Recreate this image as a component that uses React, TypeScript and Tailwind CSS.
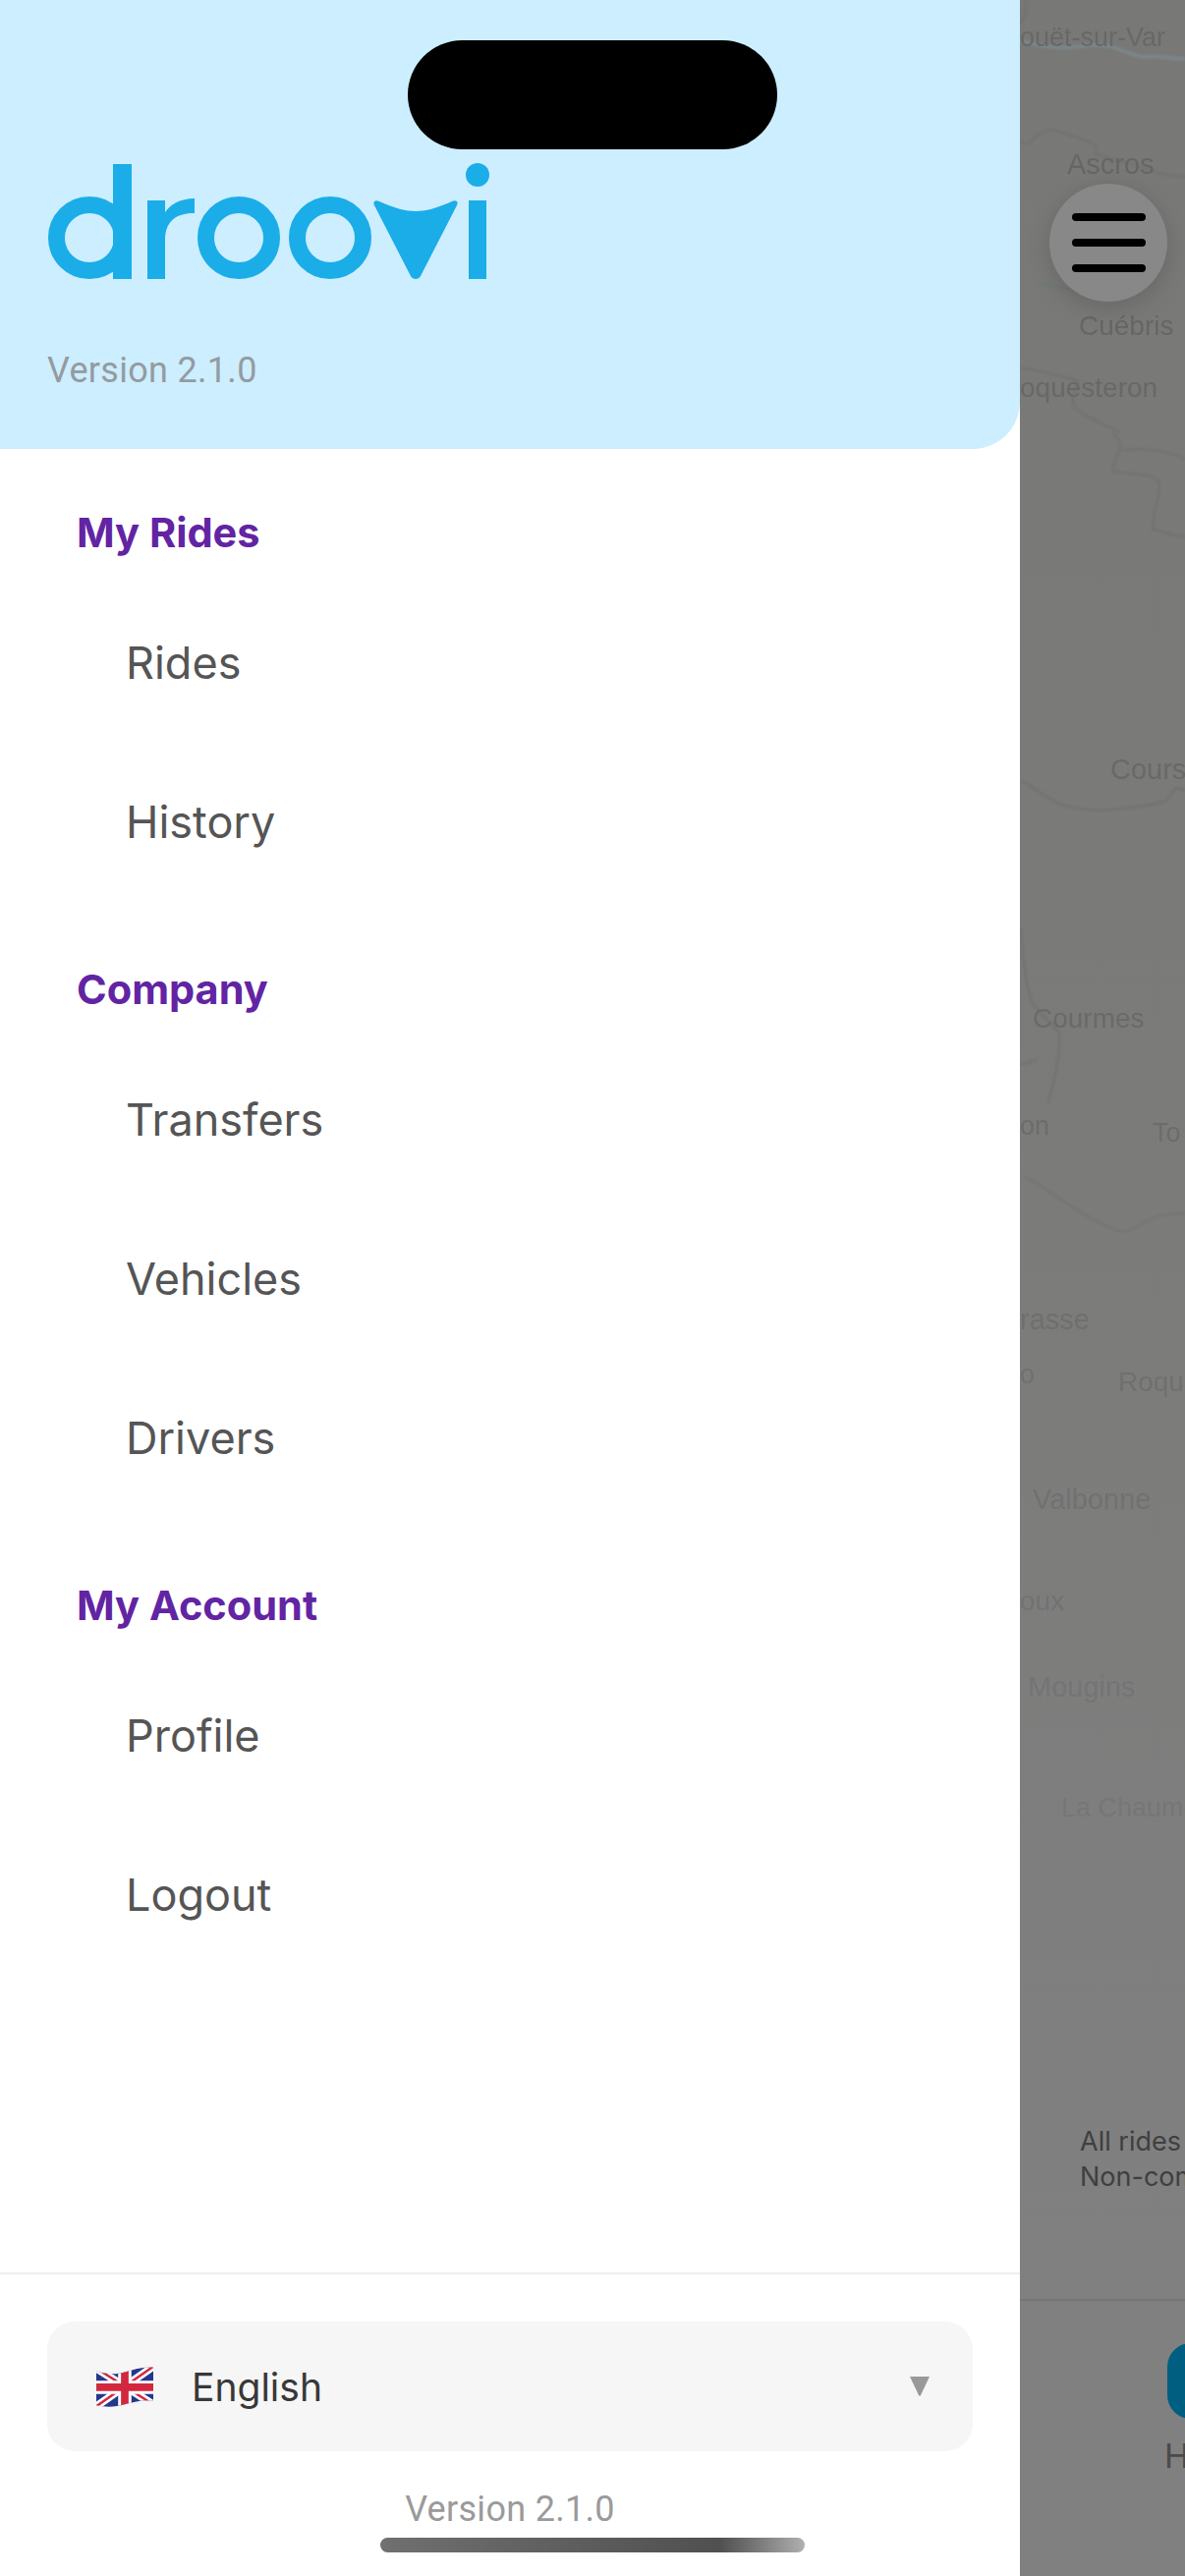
const sections = [
  { title: "My Rides", items: ["Rides", "History"] },
  { title: "Company", items: ["Transfers", "Vehicles", "Drivers"] },
  { title: "My Account", items: ["Profile", "Logout"] },
];

const mapLabels = [
  { text: "ouët-sur-Var", className: "left-[0px] top-[22px] text-[27px] text-[#686868]" },
  { text: "Ascros", className: "left-[48px] top-[151px] text-[29px] text-[#666666]" },
  { text: "Cuébris", className: "left-[60px] top-[316px] text-[28px] text-[#666666]" },
  { text: "oquesteron", className: "left-[0px] top-[379px] text-[28px] text-[#686868]" },
  { text: "Cours", className: "left-[92px] top-[767px] text-[29px] text-[#696969]" },
  { text: "Courmes", className: "left-[13px] top-[1021px] text-[28px] text-[#6a6a6a]" },
  { text: "on", className: "left-[0px] top-[1130px] text-[27px] text-[#6c6c6c]" },
  { text: "To", className: "left-[135px] top-[1137px] text-[27px] text-[#6c6c6c]" },
  { text: "rasse", className: "left-[0px] top-[1327px] text-[29px] text-[#6f6f6f]" },
  { text: "o", className: "left-[0px] top-[1383px] text-[27px] text-[#707070]" },
  { text: "Roqu", className: "left-[100px] top-[1391px] text-[28px] text-[#707070]" },
  { text: "Valbonne", className: "left-[13px] top-[1510px] text-[29px] text-[#717171]" },
  { text: "oux", className: "left-[0px] top-[1614px] text-[28px] text-[#727272]" },
  { text: "Mougins", className: "left-[8px] top-[1701px] text-[29px] text-[#747474]" },
  { text: "La Chaumes", className: "left-[42px] top-[1824px] text-[27px] text-[#767676]" },
];

function Logo() {
  return (
    <svg width="450" height="120" viewBox="48 166 450 120" fill="#1bade8">
      <circle cx="91" cy="242" r="33.5" fill="none" stroke="#1bade8" strokeWidth="17" />
      <rect x="115" y="167" width="19" height="117" />
      <rect x="150" y="204" width="18" height="80" />
      <path d="M166 220C171 208 184 202 198 202L198 217C180 217 168 224 168 245Z" />
      <circle cx="243" cy="242" r="33.5" fill="none" stroke="#1bade8" strokeWidth="17" />
      <circle cx="336" cy="242" r="33.5" fill="none" stroke="#1bade8" strokeWidth="17" />
      <path d="M381 209C379 205 382 203 386 205C402 212 413 215 423 215C433 215 444 212 460 205C464 203 467 205 465 209L428 281C426 285 420 285 418 281Z" />
      <rect x="477" y="204" width="18" height="80" />
      <ellipse cx="486" cy="178" rx="12" ry="12" />
    </svg>
  );
}

function UkFlag() {
  return (
    <svg width="58" height="42" viewBox="0 0 60 42">
      <defs>
        <clipPath id="flag-wave">
          <path d="M0 5C10 8 20 9 30 6C40 3 50 0 60 1L60 36C50 35 40 37 30 40C20 43 10 43 0 41Z" />
        </clipPath>
      </defs>
      <g clipPath="url(#flag-wave)">
        <rect width="60" height="44" fill="#23388c" />
        <path d="M0 2L60 40M60 0L0 42" stroke="#ffffff" strokeWidth="8" />
        <path d="M0 2L60 40M60 0L0 42" stroke="#d2283f" strokeWidth="2.5" />
        <path d="M30 0V44M0 22H60" stroke="#ffffff" strokeWidth="14" />
        <path d="M30 0V44M0 22H60" stroke="#d2283f" strokeWidth="8" />
      </g>
    </svg>
  );
}

// rivers and roads, roughly traced and softened like the dimmed map
function MapLines() {
  return (
    <svg className="absolute inset-0 blur-[1px]" width="168" height="2340" viewBox="0 0 168 2340" fill="none" stroke="#717171" strokeWidth="2">
      <path d="M5 0C8 10 4 18 0 23" />
      <path d="M0 42C20 46 35 50 52 48C70 46 85 44 95 48C110 54 120 58 129 58C145 56 155 60 168 60" stroke="#7b8689" strokeWidth="4" />
      <path d="M0 143C8 150 10 145 15 140C22 134 28 132 34 132C50 138 70 142 75 147C78 150 78 155 77 157C100 162 120 170 139 175C150 180 160 178 168 180" />
      <path d="M22 289C35 293 48 292 59 297" stroke="#6f7a74" />
      <path d="M0 375C15 376 30 380 42 383C50 385 58 386 59 390C55 398 52 406 55 413C60 420 68 424 75 427C85 432 95 436 102 440" />
      <path d="M95 440C100 448 104 452 102 458C98 466 94 474 95 480C108 482 125 482 135 485C140 488 143 492 142 498C140 512 135 525 135 538C145 542 158 545 168 547" />
      <path d="M105 458C125 456 150 458 168 467" />
      <path d="M2 795C15 802 28 812 42 819C60 824 78 826 95 824C115 822 135 820 149 815C154 810 155 805 159 802C162 802 165 804 168 804" />
      <path d="M1 944C2 970 6 1000 12 1020C20 1032 32 1040 40 1051C42 1075 34 1100 29 1123" />
      <path d="M1 1083C6 1082 12 1082 17 1078" />
      <path d="M5 1198C30 1210 70 1245 105 1254C115 1252 125 1244 135 1240C145 1236 158 1235 168 1235" stroke="#747474" />
    </svg>
  );
}

export default function App() {
  return (
    <div className="relative flex h-[2622px] w-[1206px] overflow-hidden bg-white font-['Inter',sans-serif]">
      {/* Drawer */}
      <aside className="flex h-full w-[1038px] shrink-0 flex-col bg-white">
        <header className="flex h-[457px] shrink-0 flex-col items-start rounded-br-[48px] bg-[#cceeff] pl-[48px] pt-[166px]">
          <Logo />
          <p className="mt-[69px] font-['Roboto',sans-serif] text-[36px] leading-[44px] tracking-[0.3px] text-[#949ba0]">
            Version 2.1.0
          </p>
        </header>

        <nav className="flex-1 pt-[34px]">
          {sections.map((section) => (
            <section key={section.title} className="mb-[39px]">
              <h2 className="flex h-[102px] items-center pl-[78px] text-[41.5px] font-bold text-[#6224a3]">
                {section.title}
              </h2>
              {section.items.map((item) => (
                <a key={item} className="flex h-[162px] items-center pl-[128px] pt-[2px] text-[45px] text-[#555555]">
                  {item}
                </a>
              ))}
            </section>
          ))}
        </nav>

        <footer className="h-[309px] shrink-0 border-t-2 border-[#eeeeee] px-[48px] pt-[48px]">
          <div className="flex h-[132px] items-center rounded-[28px] bg-[#f6f6f6] pl-[50px] pr-[44px]">
            <UkFlag />
            <span className="ml-[39px] pt-[2px] text-[39px] text-[#383838]">English</span>
            <svg className="ml-auto" width="20" height="20" viewBox="0 0 20 20" fill="#999999">
              <path d="M0 0H20L11 19C10.500 20 9.500 20 9 19Z" />
            </svg>
          </div>
          <p className="mt-[37px] text-center font-['Roboto',sans-serif] text-[36px] leading-[44px] tracking-[0.3px] text-[#9a9a9a]">
            Version 2.1.0
          </p>
        </footer>
      </aside>

      {/* Dimmed map behind the drawer */}
      <main className="flex h-full min-w-0 flex-1 flex-col">
        <div className="relative flex-1 overflow-hidden bg-linear-to-b from-[#787876] via-[#7b7b7a] to-[#808080] font-['Liberation_Sans',sans-serif]">
          <MapLines />
          {mapLabels.map((label) => (
            <span key={label.text} className={`absolute whitespace-nowrap leading-[32px] blur-[0.6px] ${label.className}`}>
              {label.text}
            </span>
          ))}
          <button className="absolute left-[30px] top-[187px] flex h-[120px] w-[120px] flex-col items-center justify-center gap-[18px] rounded-full bg-[#888888] shadow-[0_6px_24px_rgba(0,0,0,0.15)]">
            <span className="h-[8px] w-[75px] rounded-full bg-black" />
            <span className="h-[8px] w-[75px] rounded-full bg-black" />
            <span className="h-[8px] w-[75px] rounded-full bg-black" />
          </button>
          <p className="absolute left-[61px] top-[2162px] whitespace-nowrap font-['Inter',sans-serif] text-[27px] leading-[36px] text-[#3f3f3f]">
            All rides are
            <br />
            Non-commercial
          </p>
        </div>
        <div className="h-[282px] shrink-0 overflow-hidden border-t-2 border-[#757575] bg-[#808080] pl-[150px] pt-[43px]">
          <div className="h-[77px] w-[90px] rounded-[24px] bg-[#005f80]" />
          <p className="mt-[18px] -ml-[3px] whitespace-nowrap text-[34px] leading-[40px] text-[#4a4a4a]">Home</p>
        </div>
      </main>

      {/* Device chrome */}
      <div className="absolute left-[415px] top-[41px] h-[111px] w-[376px] rounded-full bg-black" />
      <div className="absolute left-[387px] top-[2583px] h-[15px] w-[432px] rounded-full bg-linear-to-r from-[#707070] via-[#505050] via-80% to-[#b0b0b0]" />
    </div>
  );
}
